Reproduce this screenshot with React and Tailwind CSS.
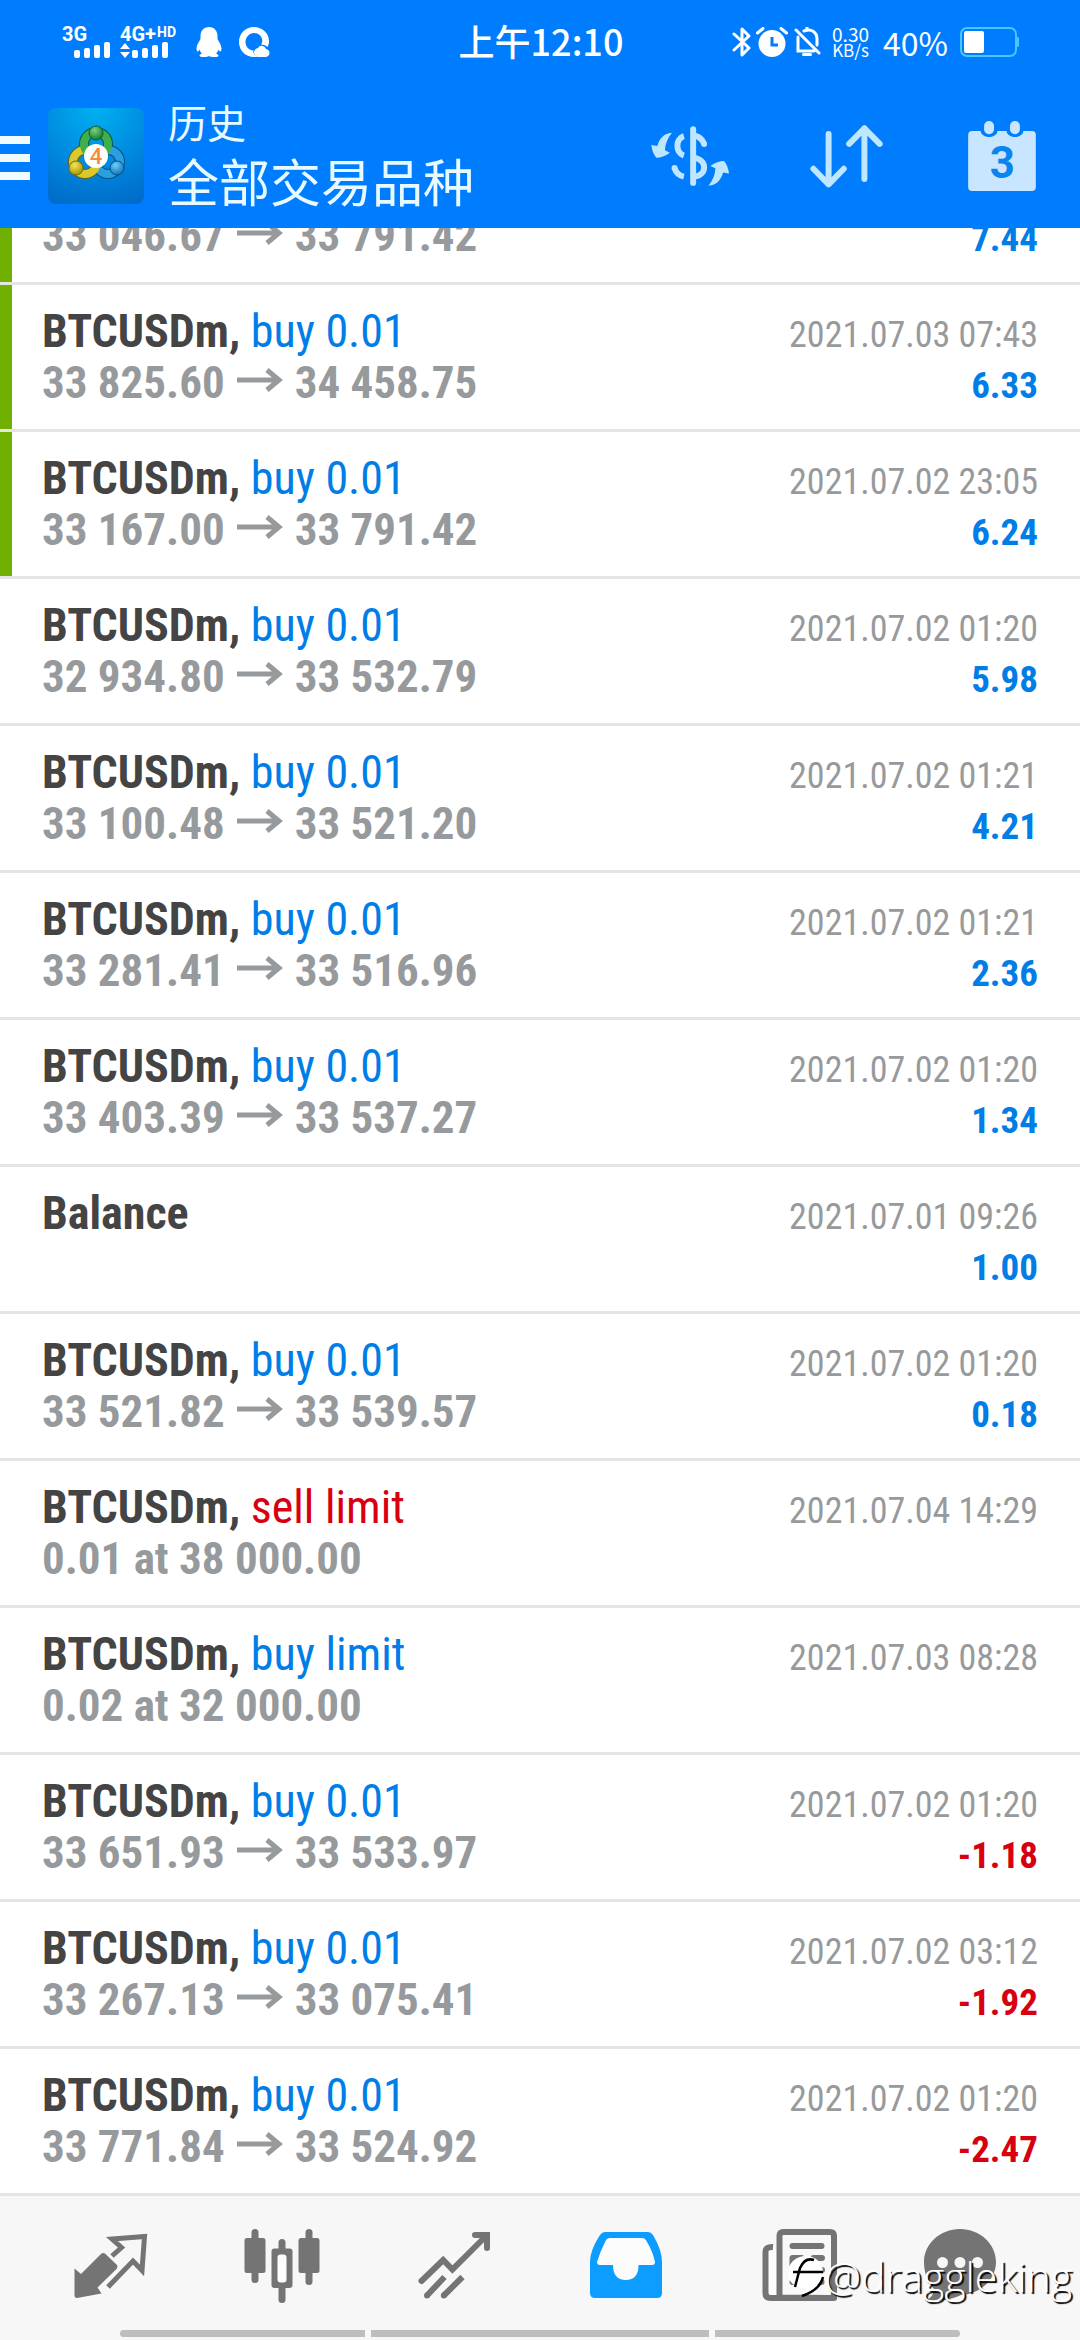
import { useState } from 'react';

// The first entry is scrolled under the header, only its second line shows.
const ROWS = [
  { id: 1, open: '33 046.67', close: '33 791.42', profit: '7.44', tp: true },
  { id: 2, symbol: 'BTCUSDm', type: 'buy 0.01', open: '33 825.60', close: '34 458.75', time: '2021.07.03 07:43', profit: '6.33', tp: true },
  { id: 3, symbol: 'BTCUSDm', type: 'buy 0.01', open: '33 167.00', close: '33 791.42', time: '2021.07.02 23:05', profit: '6.24', tp: true },
  { id: 4, symbol: 'BTCUSDm', type: 'buy 0.01', open: '32 934.80', close: '33 532.79', time: '2021.07.02 01:20', profit: '5.98' },
  { id: 5, symbol: 'BTCUSDm', type: 'buy 0.01', open: '33 100.48', close: '33 521.20', time: '2021.07.02 01:21', profit: '4.21' },
  { id: 6, symbol: 'BTCUSDm', type: 'buy 0.01', open: '33 281.41', close: '33 516.96', time: '2021.07.02 01:21', profit: '2.36' },
  { id: 7, symbol: 'BTCUSDm', type: 'buy 0.01', open: '33 403.39', close: '33 537.27', time: '2021.07.02 01:20', profit: '1.34' },
  { id: 8, symbol: 'Balance', time: '2021.07.01 09:26', profit: '1.00' },
  { id: 9, symbol: 'BTCUSDm', type: 'buy 0.01', open: '33 521.82', close: '33 539.57', time: '2021.07.02 01:20', profit: '0.18' },
  { id: 10, symbol: 'BTCUSDm', type: 'sell limit', note: '0.01 at 38 000.00', time: '2021.07.04 14:29' },
  { id: 11, symbol: 'BTCUSDm', type: 'buy limit', note: '0.02 at 32 000.00', time: '2021.07.03 08:28' },
  { id: 12, symbol: 'BTCUSDm', type: 'buy 0.01', open: '33 651.93', close: '33 533.97', time: '2021.07.02 01:20', profit: '-1.18' },
  { id: 13, symbol: 'BTCUSDm', type: 'buy 0.01', open: '33 267.13', close: '33 075.41', time: '2021.07.02 03:12', profit: '-1.92' },
  { id: 14, symbol: 'BTCUSDm', type: 'buy 0.01', open: '33 771.84', close: '33 524.92', time: '2021.07.02 01:20', profit: '-2.47' },
];

function SignalBars() {
  return (
    <svg width="36" height="16" viewBox="0 0 36 16" fill="currentColor" aria-hidden="true">
      <rect x="0" y="8" width="6" height="8" rx="2" />
      <rect x="10" y="6" width="6" height="10" rx="2" />
      <rect x="20" y="3" width="6" height="13" rx="2" />
      <rect x="30" y="0" width="6" height="16" rx="2" />
    </svg>
  );
}

function StatusBar() {
  return (
    <div className="grid h-[84px] grid-cols-[1fr_auto_1fr] items-center pr-[60px] pl-[62px] font-['Noto_Sans_CJK_SC',sans-serif] text-white">
      <div className="flex items-center">
        <div className="flex w-12 flex-col items-end font-['Roboto',sans-serif] text-[20px] leading-4 font-bold">
          <span className="self-start">3G</span>
          <SignalBars />
        </div>
        <div className="ml-[10px] flex w-[60px] flex-col font-['Roboto',sans-serif] text-[20px] leading-4 font-bold">
          <span className="flex items-start">
            4G+<span className="ml-px text-[14px] leading-3">HD</span>
          </span>
          <span className="flex items-center gap-[2px]">
            <svg width="10" height="16" viewBox="0 0 10 16" fill="currentColor" aria-hidden="true">
              <path d="M5 1l5 6H0zM5 16l5-6H0z" />
            </svg>
            <SignalBars />
          </span>
        </div>
        <svg className="ml-4" width="26" height="30" viewBox="0 0 26 30" fill="currentColor" aria-hidden="true">
          <path d="M13 0C7.500 0 4.500 4 4.500 9v3C3 15 .5 18 .5 21.500c0 1.500.5 3 1.200 3S3 23.500 3.500 22.500c.5 1.700 1.300 3 2.500 4-1.500.5-2.500 1.200-2.500 2 0 1 1.500 1.500 4.500 1.500 2 0 4-.3 5-1 1 .7 3 1 5 1 3 0 4.500-.5 4.500-1.500 0-.8-1-1.500-2.500-2 1.200-1 2-2.300 2.500-4 .5 1 1 2 1.800 2s1.200-1.500 1.200-3c0-3.500-2.500-6.500-4-9.500V9C21.500 4 18.500 0 13 0z" />
        </svg>
        <svg className="ml-4" width="32" height="30" viewBox="0 0 32 30" fill="currentColor" aria-hidden="true">
          <path
            fillRule="evenodd"
            d="M16 0c8.500 0 15 6.500 15 14 0 2.500-.5 4-1.500 6-1.500-1.500-3.500-2.500-6.500-2.500.8-1 1.300-2.200 1.300-3.500C24.300 9.500 20.600 6 16 6s-8.500 4-8.500 9 3.500 8 8 8.500c-1 4 3 6.500 6 6.500h-5.500C7.500 30 1 23.500 1 15S7.500 0 16 0z"
          />
          <path d="M21 30c-3 0-5-2-5-4.500s2-4 4-4.500c1-2 3-2.500 4.500-2 2 .3 3 1.700 3.500 3 2 .3 3.500 2 3.500 4s-1.500 4-4.500 4z" />
        </svg>
      </div>
      <time className="pb-1 text-[36px] leading-10 font-medium">上午12:10</time>
      <div className="flex items-center justify-end">
        <svg width="20" height="30" viewBox="0 0 20 30" fill="none" stroke="currentColor" strokeWidth="3" strokeLinejoin="round" strokeLinecap="round" aria-hidden="true">
          <path d="M2 7l15 14-7 7V2l7 7L2 23" />
        </svg>
        <svg className="ml-1" width="32" height="30" viewBox="0 0 32 30" aria-hidden="true">
          <circle cx="16" cy="16.500" r="13.500" fill="currentColor" />
          <path d="M1.500 6L7 1.500M30.500 6L25 1.500" stroke="currentColor" strokeWidth="3" strokeLinecap="round" />
          <path d="M16 10v8h6" fill="none" stroke="#007dff" strokeWidth="3" />
        </svg>
        <svg className="ml-[6px]" width="28" height="30" viewBox="0 0 28 30" fill="none" stroke="currentColor" strokeWidth="3" aria-hidden="true">
          <path d="M2 3l23 23M4 10v14h16M10 4c7-3 13 1 13 8v6" strokeLinecap="round" />
          <path d="M13 0v3M9.500 27.500h7" strokeLinecap="round" />
        </svg>
        <span className="ml-[10px] text-center text-[19px] leading-4">
          0.30
          <span className="block text-[17px] leading-4">KB/s</span>
        </span>
        <span className="ml-[14px] text-[32px] leading-10">40%</span>
        <svg className="ml-3" width="60" height="30" viewBox="0 0 60 30" aria-hidden="true">
          <rect x="1" y="1" width="55" height="28" rx="6" fill="none" stroke="#4cc4ff" strokeWidth="2" />
          <rect x="4" y="4" width="20" height="22" rx="2" fill="#fff" />
          <path d="M58 11v8" stroke="#4cc4ff" strokeWidth="2" strokeLinecap="round" />
        </svg>
      </div>
    </div>
  );
}

function AppLogo() {
  return (
    <svg width="96" height="96" viewBox="0 0 96 96" role="img" aria-label="MetaTrader 4">
      <defs>
        <radialGradient id="tile" cx="50%" cy="0%" r="110%">
          <stop offset="0" stopColor="#00b1f2" />
          <stop offset="0.55" stopColor="#0088de" />
          <stop offset="1" stopColor="#0069c8" />
        </radialGradient>
        <radialGradient id="green" cx="40%" cy="30%" r="75%">
          <stop offset="0" stopColor="#7fd07a" />
          <stop offset="1" stopColor="#0a7a2e" />
        </radialGradient>
        <radialGradient id="yellow" cx="40%" cy="30%" r="75%">
          <stop offset="0" stopColor="#f3e45a" />
          <stop offset="1" stopColor="#a39200" />
        </radialGradient>
        <radialGradient id="blue" cx="40%" cy="30%" r="75%">
          <stop offset="0" stopColor="#6fd0f8" />
          <stop offset="1" stopColor="#0570b4" />
        </radialGradient>
      </defs>
      <rect width="96" height="96" rx="8" fill="url(#tile)" />
      <circle cx="48" cy="36" r="12" fill="none" stroke="#0b5a3a" strokeWidth="10" />
      <circle cx="37" cy="54" r="12" fill="none" stroke="#5f6420" strokeWidth="10" />
      <circle cx="60" cy="54" r="12" fill="none" stroke="#064f86" strokeWidth="10" />
      <circle cx="60" cy="54" r="12" fill="none" stroke="#2ba0e0" strokeWidth="8" />
      <circle cx="37" cy="54" r="12" fill="none" stroke="#d9c92a" strokeWidth="8" />
      <circle cx="48" cy="36" r="12" fill="none" stroke="#3fae4c" strokeWidth="8" />
      <circle cx="48" cy="25" r="7" fill="url(#green)" stroke="#0b5a3a" />
      <circle cx="28" cy="60" r="7" fill="url(#yellow)" stroke="#7a6d00" />
      <circle cx="69" cy="60" r="7" fill="url(#blue)" stroke="#064f86" />
      <circle cx="48" cy="48" r="12" fill="#fff" />
      <text x="48" y="56" textAnchor="middle" fill="#f58b3c" className="font-['Roboto',sans-serif] text-[22px] font-medium">
        4
      </text>
    </svg>
  );
}

function DollarIcon() {
  return (
    <svg width="78" height="60" viewBox="0 0 235 180" aria-hidden="true">
      <g fill="none" stroke="currentColor" strokeWidth="18">
        <path d="M127 9v162" strokeLinecap="round" />
        <path d="M99 30C73 38 73 80 99 89" />
        <path d="M71 126Q77 147 99 152" />
        <path d="M71 126v0M160 54v0" strokeLinecap="round" />
        <path d="M130 28Q154 34 160 54" />
        <path d="M130 95C170 102 170 148 130 152" />
      </g>
      <path fill="currentColor" d="M63 20C38 22 25 38 19 60L1 57Q4 82 16 95Q36 95 57 80L42 73Q43 45 63 20zM173 180C198 178 211 162 217 140L235 143Q232 118 220 105Q200 105 179 120L194 127Q193 155 173 180z" />
    </svg>
  );
}

function SortIcon() {
  return (
    <svg width="73" height="63" viewBox="0 0 220 190" fill="none" stroke="currentColor" strokeWidth="18" strokeLinecap="round" strokeLinejoin="round" aria-hidden="true">
      <path d="M56 27v152M10 132l46 47 46-47M164 163V10M118 57l46-47 46 47" />
    </svg>
  );
}

function CalendarIcon() {
  return (
    <svg width="68" height="70" viewBox="0 0 204 211" aria-hidden="true">
      <rect y="30" width="204" height="181" rx="12" fill="#c8e6ff" />
      <rect x="37" y="-10" width="52" height="58" rx="22" fill="#007dff" />
      <rect x="115" y="-10" width="52" height="58" rx="22" fill="#007dff" />
      <rect x="48" y="0" width="30" height="40" rx="15" fill="#c8e6ff" />
      <rect x="126" y="0" width="30" height="40" rx="15" fill="#c8e6ff" />
      <text x="103" y="172" textAnchor="middle" fill="#0a84f0" className="font-['Roboto',sans-serif] text-[132px] font-bold">
        3
      </text>
    </svg>
  );
}

function Header() {
  return (
    <header className="bg-[#007dff]">
      <StatusBar />
      <div className="flex h-36 items-center">
        <button type="button" aria-label="Menu" className="flex w-[30px] flex-col gap-[10px] pt-1">
          <span className="h-2 bg-[#f0faff]" />
          <span className="h-2 bg-[#f0faff]" />
          <span className="h-2 bg-[#f0faff]" />
        </button>
        <div className="ml-[18px]">
          <AppLogo />
        </div>
        <div className="ml-6 flex-1 pb-[2px] font-['Noto_Sans_CJK_SC',sans-serif] text-[#e8faff]">
          <h1 className="text-[39px] leading-[50px]">历史</h1>
          <p className="text-[51px] leading-[68px]">全部交易品种</p>
        </div>
        <div className="flex items-center text-[#bfe6ff]">
          <button type="button" aria-label="Symbols" className="flex w-[156px] justify-center">
            <DollarIcon />
          </button>
          <button type="button" aria-label="Sort" className="flex w-[156px] justify-center">
            <SortIcon />
          </button>
          <button type="button" aria-label="Period" className="flex w-[156px] justify-center">
            <CalendarIcon />
          </button>
        </div>
      </div>
    </header>
  );
}

function Arrow() {
  return (
    <svg className="mx-[11px] mb-[6px] inline-block align-baseline" width="48" height="24" viewBox="0 0 48 24" fill="none" stroke="currentColor" strokeWidth="5" role="img" aria-label="to">
      <path d="M1 12h43M31 2l12 10-12 10" />
    </svg>
  );
}

function HistoryRow({ row }) {
  const typeColor = row.type?.startsWith('sell') ? 'text-[#d80010]' : 'text-[#007de6]';
  const profitColor = row.profit?.startsWith('-') ? 'text-[#d80010]' : 'text-[#007de6]';

  return (
    <li className="flex border-b-[3px] border-[#e4e4e4] bg-white first:-mt-[90px]">
      <span className={row.tp ? 'w-3 bg-[#6fb000]' : 'w-3'} />
      <div className="flex-1 pt-[21px] pr-[42px] pb-[21px] pl-[30px]">
        <div className="flex h-[51px] items-baseline justify-between text-[46px] leading-[51px]">
          {row.symbol && (
            <p>
              <span className="font-bold text-[#444444]">
                {row.symbol}
                {row.type && ','}
              </span>{' '}
              <span className={typeColor}>{row.type}</span>
            </p>
          )}
          <time className="text-[36px] text-[#979a9c]">{row.time}</time>
        </div>
        <div className="flex h-[51px] items-baseline justify-between text-[45px] leading-[51px] font-bold">
          <p className="text-[#979a9c]">
            {row.open ? (
              <>
                {row.open}
                <Arrow />
                {row.close}
              </>
            ) : (
              row.note || '\u00a0'
            )}
          </p>
          <p className={`text-[37px] ${profitColor}`}>{row.profit}</p>
        </div>
      </div>
    </li>
  );
}

function QuotesIcon() {
  return (
    <svg width="78" height="78" viewBox="0 0 78 78" aria-hidden="true">
      <path fill="currentColor" d="M3.500 40.500L10 46l20-20q2-2 4.500 0L46 37q1 2-.5 4L26.500 59.500l4 6L6 70q-2.500 0-2.500-2.500z" />
      <path fill="none" stroke="currentColor" strokeWidth="5" d="M41 28l9.500-8.500L41 11l32.500-2.500L71 42.500l-9-9.500-25 26" />
    </svg>
  );
}

function ChartIcon() {
  return (
    <svg width="78" height="78" viewBox="0 0 78 78" fill="currentColor" aria-hidden="true">
      <rect x="8.500" y="1" width="7" height="54" rx="3.500" />
      <rect x="1.500" y="10" width="21" height="35" rx="2.500" />
      <rect x="35.500" y="11" width="7" height="64" rx="3.500" />
      <rect x="28.500" y="20.500" width="21" height="39.500" rx="3" />
      <rect x="34.500" y="26.500" width="9" height="28" rx="3" fill="#fdfdfd" />
      <rect x="62.500" y="1" width="7" height="56" rx="3.500" />
      <rect x="55.500" y="10" width="21" height="35" rx="2.500" />
    </svg>
  );
}

function TradeIcon() {
  return (
    <svg width="78" height="78" viewBox="0 0 78 78" fill="none" stroke="currentColor" strokeWidth="6" aria-hidden="true">
      <path strokeLinecap="round" d="M6.500 53l21.700-21 9.200 9.500L71 8M60 7h12v13M12 67.500v0M28.800 67.500v0" />
      <path d="M12 67.500L29.500 49M28.800 67.500L47.500 49" />
    </svg>
  );
}

function HistoryIcon() {
  return (
    <svg width="78" height="78" viewBox="0 0 78 78" aria-hidden="true">
      <path fill="#0d9cff" d="M18 4h43q3 0 5 3 9 15 9 27v31q0 5-5 5H8q-5 0-5-5V34Q3 22 13 7q2-3 5-3z" />
      <path fill="#fcfcfc" d="M23 10h32q3 0 4.500 3Q66 24 68 34q0 3-3 3H51.500q0 15-12.700 15T26 37H13q-3 0-3-3 3-10 8.500-21Q20 10 23 10z" />
    </svg>
  );
}

function NewsIcon() {
  return (
    <svg width="78" height="78" viewBox="-2 0 78 78" fill="none" aria-hidden="true">
      <path d="M12 19q-7.500-.5-7.500 5v41q0 5 5 5H72q2 0 2-2" fill="#fdfdfd" stroke="currentColor" strokeWidth="6" />
      <path d="M18.500 69.500V8q0-4 4-4H69q4 0 4 4v58q0 4-4 4z" fill="#f8f8f8" stroke="currentColor" strokeWidth="6" />
      <path stroke="currentColor" strokeWidth="6" strokeLinecap="round" d="M31.500 18h29M52.500 30h8.500M52.500 42h8.500M31.500 54h29" />
      <rect x="28.500" y="27" width="15" height="18" rx="3" fill="currentColor" />
    </svg>
  );
}

function MessagesIcon() {
  return (
    <svg width="98" height="78" viewBox="0 0 98 78" aria-hidden="true">
      <path fill="currentColor" d="M39 1c20 0 36 15 36 33S59 66 40 67c-10 5-22 6.500-36 6 6-3 9-7 9-12C6 54 3 44 3 34 3 16 19 1 39 1z" />
      <circle cx="21.500" cy="34.500" r="5.500" fill="#f7f7f7" />
      <circle cx="39" cy="34.500" r="5.500" fill="#f7f7f7" />
      <circle cx="56.500" cy="34.500" r="5.500" fill="#f7f7f7" />
    </svg>
  );
}

const TABS = [
  { key: 'quotes', label: '行情', Icon: QuotesIcon },
  { key: 'chart', label: '图表', Icon: ChartIcon },
  { key: 'trade', label: '交易', Icon: TradeIcon },
  { key: 'history', label: '历史', Icon: HistoryIcon },
  { key: 'news', label: '新闻', Icon: NewsIcon },
  { key: 'messages', label: '信息', Icon: MessagesIcon },
];

function Watermark() {
  return (
    <div className="pointer-events-none absolute right-2 bottom-10 flex items-center">
      <svg width="38" height="44" viewBox="0 0 38 44" aria-hidden="true">
        <path fill="#fff" d="M19 2c10 0 17 7 17 16 0 10-8 15-18 23l1-7C8 34 1 28 1 19 1 9 9 2 19 2z" />
        <path fill="none" stroke="#000" strokeWidth="2.500" d="M6 18h30M15 42q18-6 21-19M8 33l5-19q5-11 14-8" />
      </svg>
      <span className="font-['Open_Sans',sans-serif] text-[41px] leading-[48px] font-light text-white [text-shadow:2px_2px_1px_#000]">
        @draggleking
      </span>
    </div>
  );
}

function TabBar() {
  const [active, setActive] = useState('history');

  return (
    <footer className="relative bg-[#f7f7f7] pb-[3px]">
      <nav className="flex px-6 pt-8 text-[#747474]">
        {TABS.map(({ key, label, Icon }) => (
          <button
            key={key}
            type="button"
            aria-label={label}
            aria-current={active === key ? 'page' : undefined}
            onClick={() => setActive(key)}
            className="flex flex-1 justify-center"
          >
            <Icon />
          </button>
        ))}
      </nav>
      <div className="mx-[120px] mt-6 flex gap-[6px]">
        <span className="h-[7px] w-[245px] rounded-l-full bg-[#bdbdbd]" />
        <span className="h-[7px] flex-1 bg-[#bdbdbd]" />
        <span className="h-[7px] w-[245px] rounded-r-full bg-[#bdbdbd]" />
      </div>
      <Watermark />
    </footer>
  );
}

export default function App() {
  return (
    <div className="flex min-h-screen flex-col bg-white font-['Roboto_Condensed',Roboto,sans-serif]">
      <Header />
      <main className="flex-1 overflow-hidden">
        <ul>
          {ROWS.map((row) => (
            <HistoryRow key={row.id} row={row} />
          ))}
        </ul>
      </main>
      <TabBar />
    </div>
  );
}
